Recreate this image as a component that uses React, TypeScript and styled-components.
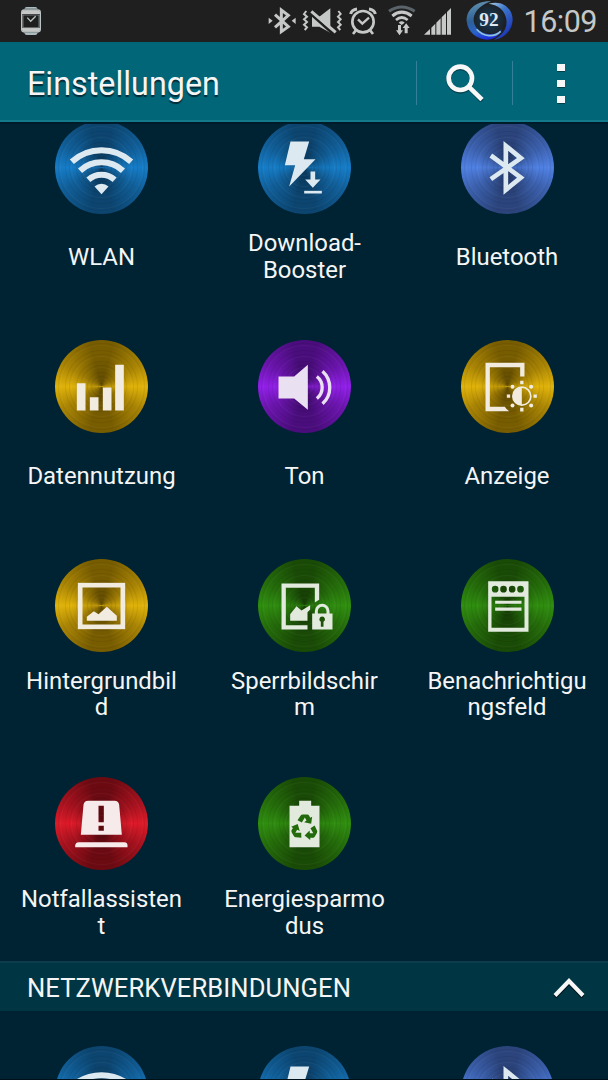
import type { ReactNode } from 'react';
import styled, { createGlobalStyle } from 'styled-components';

type Tone = 'blue' | 'indigo' | 'gold' | 'violet' | 'green' | 'red';

const tones: Record<Tone, { light: string; mid: string; dark: string; glyph: string }> = {
  blue: { light: '#167cc6', mid: '#115f99', dark: '#0c4570', glyph: '#dce9f1' },
  indigo: { light: '#4f80e2', mid: '#3c61ae', dark: '#2b447c', glyph: '#dce9f1' },
  gold: { light: '#dfb20a', mid: '#a98404', dark: '#775c00', glyph: '#f1ecdf' },
  violet: { light: '#901fe6', mid: '#6b15ad', dark: '#4a0d7c', glyph: '#e9e0f1' },
  green: { light: '#2f8d0f', mid: '#256d0b', dark: '#1a4b06', glyph: '#e2eadd' },
  red: { light: '#dc1a29', mid: '#a5121e', dark: '#6c0a12', glyph: '#f7eaeb' },
};

const WlanGlyph = () => (
  <>
    <g fill="none" stroke="currentColor" strokeWidth="18">
      <path d="M-89-17.5A132 132 0 0 1 89-17.5" />
      <path d="M-64.4 9.5A95.5 95.5 0 0 1 64.4 9.5" />
      <path d="M-39.4 36.8A58.5 58.5 0 0 1 39.4 36.8" />
    </g>
    <path d="M0 80L-21 57A31 31 0 0 1 21 57Z" fill="currentColor" />
  </>
);

const BoosterGlyph = () => (
  <g fill="currentColor">
    <path d="M-42-78H14L-2-25H33L-46 57L-28-7H-59Z" />
    <path d="M18 12H32V36H48L25 61L2 36H18Z" />
    <path d="M-1 70H52V78H-1Z" />
  </g>
);

const BluetoothGlyph = () => (
  <path
    d="M-50-36L40 30L-5 67V-65L40-28L-50 35"
    fill="none"
    stroke="currentColor"
    strokeWidth="14"
    strokeMiterlimit="10"
  />
);

const DataGlyph = () => (
  <path
    d="M-74-10H-48V72H-74ZM-35 32H-9V72H-35ZM4 3H30V72H4ZM41-65H67V72H41Z"
    fill="currentColor"
  />
);

const SoundGlyph = () => (
  <>
    <path d="M-78-30H-31L10-65V70L-31 36H-78Z" fill="currentColor" />
    <g fill="none" stroke="currentColor" strokeWidth="10">
      <path d="M37-30A42 42 0 0 1 37 36" />
      <path d="M54-46A66 66 0 0 1 54 52" />
    </g>
  </>
);

const DisplayGlyph = () => (
  <g fill="currentColor">
    <path d="M-66-71H51V-30H38V-58H-53V61H-8Q-3 70 5 74H-66Z" />
    <circle cx="43" cy="29" r="27" fill="none" stroke="currentColor" strokeWidth="5" />
    <path d="M43 2A27 27 0 0 0 43 56Z" />
    <path d="M38-17H48V-7H38ZM38 64H48V75H38ZM-2 24H8V34H-2ZM78 24H88V34H78Z" />
    <circle cx="15" cy="1" r="6" />
    <circle cx="71" cy="1" r="6" />
    <circle cx="15" cy="57" r="6" />
    <circle cx="71" cy="57" r="6" />
  </g>
);

const WallpaperGlyph = () => (
  <>
    <rect x="-64" y="-61" width="128" height="125" fill="none" stroke="currentColor" strokeWidth="14" />
    <path d="M-44 46V34L-23 17L-9 26L16 4L46 31V46Z" fill="currentColor" />
  </>
);

const LockScreenGlyph = () => (
  <>
    <path d="M-69-66H44V-17L31-9V-53H-56V59H9V72H-69Z" fill="currentColor" />
    <path d="M-43 46V26L-24 2L-9 15L17-1V12L9 20V46Z" fill="currentColor" />
    <path d="M35.5 26V17a17.5 17.5 0 0 1 35 0V26" fill="none" stroke="currentColor" strokeWidth="9" />
    <path d="M23 24H84V72H23Z" fill="currentColor" />
    <path d="M53 33a8.5 8.5 0 0 1 4 16V64H49V49a8.5 8.5 0 0 1 4-16Z" fill="#1d5208" />
  </>
);

const PanelGlyph = () => (
  <>
    <path
      fillRule="evenodd"
      d="M-58-73H63V79H-58ZM-48-26V67H51V-26Z
        M-47-49a10 10 0 1 0 20 0a10 10 0 1 0-20 0Z
        M-22-49a10 10 0 1 0 20 0a10 10 0 1 0-20 0Z
        M4-49a10 10 0 1 0 20 0a10 10 0 1 0-20 0Z
        M29-49a10 10 0 1 0 20 0a10 10 0 1 0-20 0Z"
      fill="currentColor"
    />
    <path d="M-37-14H42V-5H-37ZM-37 6H42V16H-37Z" fill="currentColor" />
  </>
);

const EmergencyGlyph = () => (
  <g fill="currentColor">
    <path
      fillRule="evenodd"
      d="M-62 34L-54-56Q-52-68-40-68H39Q51-68 53-56L61 34ZM-9-53V-4H7V-53ZM-9 7V22H7V7Z"
    />
    <path d="M-79 71V66Q-78 56-68 56H68Q78 56 78 66V71Z" />
  </g>
);

const recycleArrow = 'M-21-23L-12-36Q-10-40-5-40H8Q12-40 14-36L17-30L23-33L20-12L-1-17L6-22L1-31L-8-16Z';

const EnergyGlyph = () => (
  <>
    <path d="M-16-68H20V-53H45V71H-45V-53H-16Z" fill="currentColor" />
    <g transform="translate(0 13)" fill="#226a0b">
      <path d={recycleArrow} />
      <path d={recycleArrow} transform="rotate(120)" />
      <path d={recycleArrow} transform="rotate(240)" />
    </g>
  </>
);

interface Setting {
  label?: string;
  tone: Tone;
  glyph: ReactNode;
}

const quickSettings: Setting[] = [
  { label: 'WLAN', tone: 'blue', glyph: <WlanGlyph /> },
  { label: 'Download-\nBooster', tone: 'blue', glyph: <BoosterGlyph /> },
  { label: 'Bluetooth', tone: 'indigo', glyph: <BluetoothGlyph /> },
  { label: 'Datennutzung', tone: 'gold', glyph: <DataGlyph /> },
  { label: 'Ton', tone: 'violet', glyph: <SoundGlyph /> },
  { label: 'Anzeige', tone: 'gold', glyph: <DisplayGlyph /> },
  { label: 'Hintergrundbil\nd', tone: 'gold', glyph: <WallpaperGlyph /> },
  { label: 'Sperrbildschir\nm', tone: 'green', glyph: <LockScreenGlyph /> },
  { label: 'Benachrichtigu\nngsfeld', tone: 'green', glyph: <PanelGlyph /> },
  { label: 'Notfallassisten\nt', tone: 'red', glyph: <EmergencyGlyph /> },
  { label: 'Energiesparmo\ndus', tone: 'green', glyph: <EnergyGlyph /> },
];

// only the tops of these are on screen, so they carry no label
const networkSettings: Setting[] = [
  { tone: 'blue', glyph: <WlanGlyph /> },
  { tone: 'blue', glyph: <BoosterGlyph /> },
  { tone: 'indigo', glyph: <BluetoothGlyph /> },
];

const SettingItem = ({ label, tone, glyph }: Setting) => (
  <StyleItem>
    <StyleDisc $tone={tone}>
      <svg viewBox="-139.5 -139.5 279 279" width="93" height="93">
        {glyph}
      </svg>
    </StyleDisc>
    {label && (
      <StyleLabel $wrapped={label.includes('\n')}>
        <span>{label}</span>
      </StyleLabel>
    )}
  </StyleItem>
);

const StatusIcons = () => (
  <StyleStatusIcons>
    {/* bluetooth */}
    <svg viewBox="36 0 93 126" width="31" height="42">
      <path d="M57 44L97 80L76 95V30L97 46L57 82" fill="none" stroke="currentColor" strokeWidth="9" strokeMiterlimit="10" />
      <path d="M38 53V72L50 62.5ZM119 53V72L107 62.5Z" fill="currentColor" />
    </svg>
    {/* vibrate, sound off */}
    <svg viewBox="129 0 138 126" width="46" height="42">
      <path d="M168 50H190L223 25V98L190 80H168Z" fill="currentColor" />
      <path d="M162 40L236 106" stroke="#1f1f1f" strokeWidth="8" />
      <path d="M166 34L239 97" stroke="currentColor" strokeWidth="9" />
      <g fill="none" stroke="currentColor" strokeWidth="6">
        <path d="M151 33L144 42L153 50L144 58L153 66L144 74L153 82L146 90" />
        <path d="M247 33L254 42L246 50L254 58L246 66L254 74L246 82L253 90" />
      </g>
    </svg>
    {/* alarm */}
    <svg viewBox="267 0 114 126" width="38" height="42">
      <g fill="none" stroke="currentColor">
        <circle cx="321" cy="65" r="32" strokeWidth="8" />
        <path d="M306 58L319 71L339 53" strokeWidth="7" />
        <path d="M284 42Q287 29 303 27M358 42Q355 29 339 27" strokeWidth="9" />
        <path d="M299 92L291 102M343 92L351 102" strokeWidth="8" />
      </g>
    </svg>
    {/* wifi with traffic */}
    <svg viewBox="381 0 108 126" width="36" height="42">
      <path d="M399 34Q437 8 476 34" fill="none" stroke="#5b646a" strokeWidth="9" />
      <g fill="none" stroke="currentColor">
        <path d="M409 48Q437 25 467 48" strokeWidth="9" />
        <path d="M420 60Q437 45 455 60" strokeWidth="8" />
      </g>
      <path d="M428 68Q437 60 446 68L437 75Z" fill="currentColor" />
      <path d="M426 75H435V91H441L430.500 106L420 91H426ZM446 100H455V84H461L450.500 70L440 84H446Z" fill="currentColor" />
    </svg>
    {/* signal */}
    <svg viewBox="489 0 120 126" width="40" height="42">
      <path
        d="M504 104L522 87V104ZM526 83L538 71V104H526ZM541 68L554 55V104H541ZM557 52L570 39V104H557ZM573 36L585 24V104H573Z"
        fill="currentColor"
      />
    </svg>
    {/* battery ring */}
    <svg viewBox="609 0 180 126" width="60" height="42">
      <defs>
        <linearGradient id="ringLeft" x1="0.4" y1="0" x2="0.6" y2="1">
          <stop offset="0" stopColor="#5f8fae" />
          <stop offset="0.45" stopColor="#2d6098" />
          <stop offset="0.75" stopColor="#2b62c8" />
          <stop offset="1" stopColor="#1a2be0" />
        </linearGradient>
        <linearGradient id="ringRight" x1="0" y1="0" x2="0.6" y2="1">
          <stop offset="0" stopColor="#a9cde2" />
          <stop offset="0.4" stopColor="#3c76cc" />
          <stop offset="1" stopColor="#1a35b8" />
        </linearGradient>
        <radialGradient id="ringCore">
          <stop offset="0" stopColor="#153f63" />
          <stop offset="1" stopColor="#1b2228" />
        </radialGradient>
      </defs>
      <circle cx="700" cy="60" r="46" fill="url(#ringCore)" />
      <path
        d="M706 4C655 2 630 34 632 64C635 98 665 119 694 119C716 118 732 106 737 88C720 107 690 108 669 91C641 67 648 24 706 4Z"
        fill="url(#ringLeft)"
      />
      <path d="M698 11C742-2 769 28 770 57C770 90 746 115 714 119C740 104 755 85 751 58C747 32 728 15 698 11Z" fill="url(#ringRight)" />
      <path d="M662 88C682 112 716 112 734 94" fill="none" stroke="#8fc0dd" strokeWidth="5" />
      <text x="699" y="78" textAnchor="middle" fontFamily="'Liberation Serif', serif" fontWeight="700" fontSize="57" fill="#e2e8ee" textLength="58" lengthAdjust="spacingAndGlyphs">
        92
      </text>
    </svg>
  </StyleStatusIcons>
);

export default function App() {
  return (
    <>
      <GlobalStyle />
      <StyleScreen>
        <StyleStatusBar>
          <StyleWatch viewBox="60 0 66 126">
            <path d="M73 26Q75 21 80 21H106Q111 21 113 26ZM73 99Q75 105 80 105H106Q111 105 113 99Z" fill="#a9bdc0" />
            <rect x="65" y="30" width="56" height="66" rx="8" fill="#1f1f1f" stroke="#b9c2c4" strokeWidth="4" />
            <path d="M65 42Q65 31 76 31H110Q121 31 121 42ZM65 84H121Q121 95 110 95H76Q65 95 65 84Z" fill="#c6c8c8" />
            <path d="M69 45V83H117V45Z" fill="#1f1f1f" stroke="#9aa5a7" strokeWidth="2" />
            <path d="M82 53L92 64L107 49" fill="none" stroke="#b9c8c6" strokeWidth="4" />
          </StyleWatch>
          <StatusIcons />
          <StyleClock>16:09</StyleClock>
        </StyleStatusBar>
        <StyleActionBar>
          <StyleTitle>Einstellungen</StyleTitle>
          <StyleAction>
            <svg viewBox="0 0 114 114" width="38" height="38">
              <g fill="none" strokeWidth="14">
                <path d="M71 72L108 111" stroke="#00404e" />
                <circle cx="43" cy="47" r="35" stroke="#00404e" />
                <circle cx="43" cy="43" r="35" stroke="#f7f7f7" />
                <path d="M68 68L108 107" stroke="#f7f7f7" />
              </g>
            </svg>
          </StyleAction>
          <StyleAction>
            <StyleDots>
              <i />
              <i />
              <i />
            </StyleDots>
          </StyleAction>
        </StyleActionBar>
        <StyleList>
          <StyleGrid $first>
            {quickSettings.map((item) => (
              <SettingItem key={item.label} {...item} />
            ))}
          </StyleGrid>
          <StyleSection>
            <StyleSectionTitle>NETZWERKVERBINDUNGEN</StyleSectionTitle>
            <svg viewBox="0 0 32 20" width="32" height="20">
              <path d="M2 19L16 4.500L30 19" fill="none" stroke="#00141c" strokeWidth="4" />
              <path d="M2 17.500L16 3L30 17.500" fill="none" stroke="#f7f7f7" strokeWidth="4" />
            </svg>
          </StyleSection>
          <StyleGrid>
            {networkSettings.map((item, i) => (
              <SettingItem key={i} {...item} />
            ))}
          </StyleGrid>
        </StyleList>
      </StyleScreen>
    </>
  );
}

const GlobalStyle = createGlobalStyle`
  body {
    margin: 0;
    background: #001019;
    font-family: Roboto, sans-serif;
    color: #f5f5f5;
  }
  * {
    box-sizing: border-box;
  }
  svg {
    display: block;
    flex-shrink: 0;
  }
`;

const StyleScreen = styled.div`
  width: 608px;
  height: 1080px;
  padding-bottom: 1px;
  display: flex;
  flex-direction: column;
  overflow: hidden;
`;

const StyleStatusBar = styled.div`
  height: 42px;
  flex-shrink: 0;
  display: flex;
  align-items: center;
  padding: 0 11px 0 20px;
  background: #1f1f1f;
  color: #c6c8c8;
`;

const StyleWatch = styled.svg`
  width: 22px;
  height: 42px;
`;

const StyleStatusIcons = styled.div`
  display: flex;
  margin-left: auto;
`;

const StyleClock = styled.div`
  width: 78px;
  padding-top: 1px;
  text-align: right;
  font-size: 30.5px;
  letter-spacing: -0.5px;
  line-height: 41px;
  white-space: nowrap;
`;

const StyleActionBar = styled.header`
  height: 80px;
  flex-shrink: 0;
  display: flex;
  align-items: center;
  padding-left: 27px;
  background: #006678;
  border-bottom: 2px solid #147a8b;
`;

const StyleTitle = styled.h1`
  flex: 1;
  margin: 0;
  padding-top: 5px;
  font-size: 32.3px;
  font-weight: 400;
  line-height: 38px;
  text-shadow: 0 2px 1px rgba(0, 20, 30, 0.7);
`;

const StyleAction = styled.div`
  width: 96px;
  height: 44px;
  margin-top: 4px;
  display: flex;
  align-items: center;
  justify-content: center;
  border-left: 1px solid #33809a;
`;

const StyleDots = styled.div`
  display: grid;
  gap: 9px;
  & i {
    width: 8px;
    height: 7px;
    background: #f7f7f7;
    box-shadow: 0 1px 0 #00404e;
  }
`;

const StyleList = styled.main`
  flex: 1;
  min-height: 0;
  border-top: 2px solid #001b29;
  background: #002333;
  overflow: hidden;
`;

const StyleGrid = styled.div<{ $first?: boolean }>`
  display: grid;
  grid-template-columns: 203px 203px 202px;
  row-gap: 55.75px;
  margin-top: ${(props) => (props.$first ? '-3px' : '35px')};
  padding-bottom: 20.75px;
`;

const StyleItem = styled.div`
  display: flex;
  flex-direction: column;
  align-items: center;
`;

const StyleDisc = styled.div<{ $tone: Tone }>`
  width: 93px;
  height: 93px;
  border-radius: 50%;
  color: ${(props) => tones[props.$tone].glyph};
  background: ${({ $tone }) => {
    const { light, mid, dark } = tones[$tone];
    return `
      repeating-radial-gradient(circle, transparent 0 2px, rgba(0, 0, 0, 0.07) 3px, transparent 4px 7px, rgba(255, 255, 255, 0.03) 8px, transparent 9px, rgba(0, 0, 0, 0.06) 10px, transparent 11px),
      radial-gradient(circle, rgba(0, 0, 0, 0.16) 0 8px, transparent 30px),
      conic-gradient(from 90deg, ${light}, ${mid} 30deg, ${dark} 75deg, ${dark} 105deg, ${mid} 150deg, ${light} 180deg, ${mid} 210deg, ${dark} 255deg, ${dark} 285deg, ${mid} 330deg, ${light})
    `;
  }};
`;

const StyleLabel = styled.div<{ $wrapped: boolean }>`
  height: 53px;
  margin: ${(props) => (props.$wrapped ? '16px 0 1px' : '17px 0 0')};
  display: flex;
  align-items: center;
  text-align: center;
  white-space: pre;
  font-size: 23.9px;
  line-height: 26.5px;
`;

const StyleSection = styled.div`
  height: 50px;
  display: flex;
  align-items: center;
  justify-content: space-between;
  padding: 2px 23px 0 27px;
  background: #003543;
  border-top: 2px solid #0d3d4d;
`;

const StyleSectionTitle = styled.h2`
  margin: 0;
  font-size: 25.6px;
  letter-spacing: 0.08px;
  font-weight: 400;
  line-height: 29px;
`;
